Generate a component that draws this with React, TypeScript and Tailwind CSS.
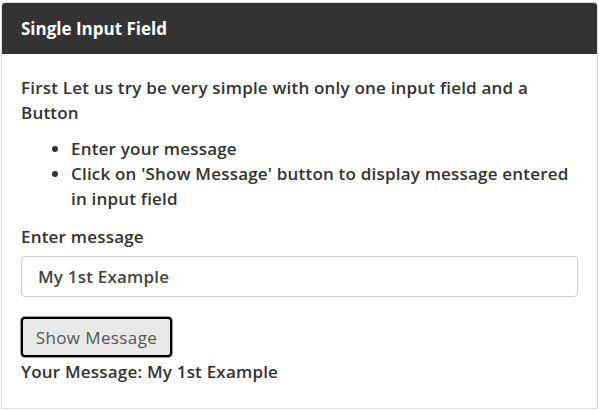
export default function App() {
  return (
    <div className="h-[410px] w-[599px] bg-white pl-px pr-px pt-[2px] font-['Open_Sans',sans-serif] text-[#333]">
      <div className="flex h-[407px] flex-col overflow-hidden rounded-t border border-[#ddd]">
        <div className="flex h-[51px] items-center bg-[#333] px-[19px] text-[17px] font-bold text-white">
          Single Input Field
        </div>
        <div className="flex flex-col px-[19px] pt-[21px] text-[17px] font-semibold leading-[25px] tracking-[0.2px]">
          <p>First Let us try be very simple with only one input field and a Button</p>
          <ul className="mt-[11px] list-disc pl-[50px]">
            <li>Enter your message</li>
            <li>Click on 'Show Message' button to display message entered in input field</li>
          </ul>
          <label className="mt-[13px]">Enter message</label>
          <input
            defaultValue="My 1st Example"
            className="mt-[7px] h-[41px] w-full rounded border border-[#ccc] px-[16px] text-[17px] font-semibold tracking-[0.2px] text-[#444] outline-none"
          />
          <div className="mt-[20px] flex">
            <button className="h-[40px] w-[151px] rounded border-2 border-black bg-[#e9e9e9] text-[17px] font-normal tracking-[0.4px] text-[#555] ring-1 ring-[#999]">
              Show Message
            </button>
          </div>
          <div className="mt-[2px]">Your Message: My 1st Example</div>
        </div>
      </div>
    </div>
  );
}
